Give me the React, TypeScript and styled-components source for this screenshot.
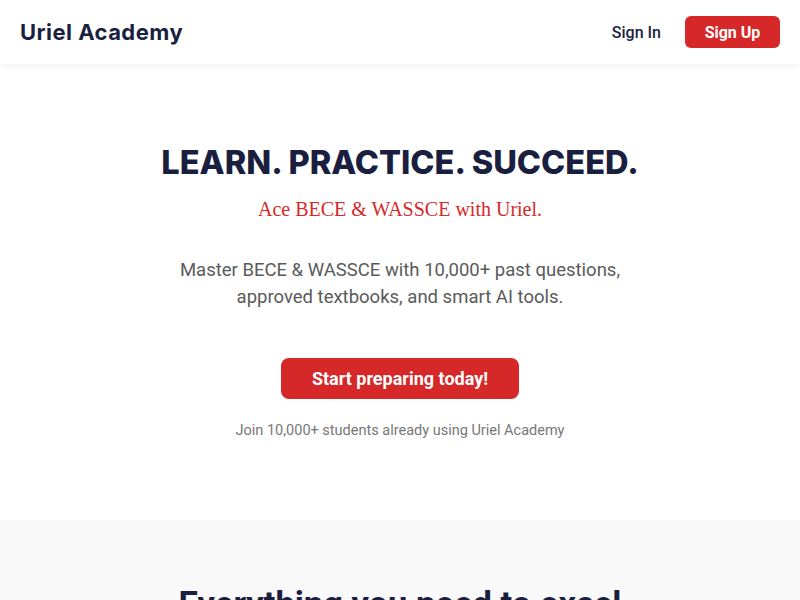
import React from "react";
import styled, { createGlobalStyle } from "styled-components";

const Global = createGlobalStyle`
  html, body { margin: 0; padding: 0; background: #ffffff; }
  body { font-family: Roboto, "Liberation Sans", sans-serif; }
  * { box-sizing: border-box; }
`;

const Header = styled.header`
  height: 64px;
  display: flex;
  align-items: center;
  justify-content: space-between;
  padding: 0 20px;
  background: #ffffff;
  box-shadow: 0 2px 6px rgba(0, 0, 0, 0.06);
  position: relative;
  z-index: 1;
`;

const Logo = styled.div`
  font-family: Inter, "Noto Sans", sans-serif;
  font-weight: 700;
  font-size: 22px;
  color: #1b1f3f;
  letter-spacing: 0.45px;
`;

const Nav = styled.nav`
  display: flex;
  align-items: center;
  gap: 24px;
`;

const SignIn = styled.a`
  font-family: Roboto, sans-serif;
  font-size: 16px;
  font-weight: 500;
  color: #1b1f3f;
  text-decoration: none;
`;

const SignUp = styled.button`
  border: none;
  background: #d62828;
  color: #ffffff;
  font-family: Roboto, sans-serif;
  font-weight: 700;
  font-size: 16px;
  width: 95px;
  height: 32px;
  border-radius: 6px;
`;

const Hero = styled.section`
  display: flex;
  flex-direction: column;
  align-items: center;
  text-align: center;
  padding: 78px 20px 0;
  height: 456px;
`;

const Title = styled.h1`
  margin: 0;
  font-family: Inter, "Noto Sans", sans-serif;
  font-weight: 800;
  font-size: 32.6px;
  line-height: 40px;
  color: #1b1f3f;
`;

const Tagline = styled.h2`
  margin: 14px 0 0;
  font-family: "Liberation Serif", serif;
  font-weight: 400;
  font-size: 20px;
  line-height: 26px;
  color: #d62828;
`;

const Lead = styled.p`
  margin: 35px 0 0;
  font-family: Roboto, sans-serif;
  font-size: 18.5px;
  line-height: 27px;
  color: #5a5a5a;
`;

const Cta = styled.button`
  margin-top: 47px;
  border: none;
  background: #d62828;
  color: #ffffff;
  font-family: Roboto, sans-serif;
  font-weight: 700;
  font-size: 18px;
  width: 238px;
  height: 41px;
  border-radius: 8px;
`;

const Note = styled.p`
  margin: 22px 0 0;
  font-family: Roboto, sans-serif;
  font-size: 14.5px;
  line-height: 20px;
  color: #777777;
`;

const Features = styled.section`
  background: #f9f9f9;
  padding: 62px 20px 40px;
  text-align: center;
`;

const FeaturesTitle = styled.h2`
  margin: 0;
  font-family: Roboto, sans-serif;
  font-weight: 700;
  font-size: 34.5px;
  line-height: 44px;
  color: #1b1f3f;
`;

export default function App() {
  return (
    <>
      <Global />
      <Header>
        <Logo>Uriel Academy</Logo>
        <Nav>
          <SignIn href="#">Sign In</SignIn>
          <SignUp>Sign Up</SignUp>
        </Nav>
      </Header>
      <Hero>
        <Title>LEARN. PRACTICE. SUCCEED.</Title>
        <Tagline>Ace BECE &amp; WASSCE with Uriel.</Tagline>
        <Lead>
          Master BECE &amp; WASSCE with 10,000+ past questions,
          <br />
          approved textbooks, and smart AI tools.
        </Lead>
        <Cta>Start preparing today!</Cta>
        <Note>Join 10,000+ students already using Uriel Academy</Note>
      </Hero>
      <Features>
        <FeaturesTitle>Everything you need to excel</FeaturesTitle>
      </Features>
    </>
  );
}
